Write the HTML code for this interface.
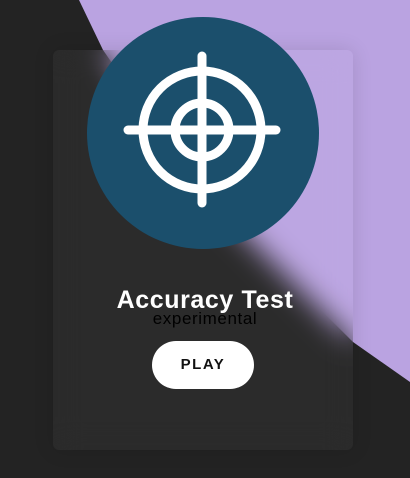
<!DOCTYPE html>
<html><head><style>
html,body{margin:0;padding:0}
body{width:410px;height:478px;background:#232323;position:relative;overflow:hidden;font-family:"Liberation Sans",sans-serif}
svg.bg{position:absolute;left:0;top:0}
.card{position:absolute;left:53px;top:50px;width:300px;height:400px;border-radius:6px;background:rgba(255,255,255,0.04);backdrop-filter:blur(14px);-webkit-backdrop-filter:blur(14px);box-shadow:0 0 20px rgba(0,0,0,0.12)}
.circ{position:absolute;left:87px;top:17px;width:232px;height:232px;border-radius:50%;background:#1b4f6c}
.title{position:absolute;left:0;width:410px;top:286px;text-align:center;color:#fff;font-weight:bold;font-size:25px;letter-spacing:0.6px}
.sub{position:absolute;left:0;width:410px;top:309px;text-align:center;color:#000;font-size:17px;letter-spacing:0.6px}
.btn{position:absolute;left:152px;top:341px;width:102px;height:48px;border-radius:24px;background:#fff;color:#111;font-weight:bold;font-size:15px;letter-spacing:1.5px;text-align:center;line-height:48px}
</style></head><body>
<svg class="bg" width="410" height="478"><polygon points="79,0 410,0 410,382 353,342 200,190 103,50" fill="#baa3e1"/></svg>
<div class="card"></div>
<div class="circ"></div>
<svg style="position:absolute;left:0;top:0" width="410" height="478">
<g stroke="#fff" stroke-width="9" fill="none" stroke-linecap="round">
<circle cx="202" cy="130" r="59"/>
<circle cx="202" cy="130" r="27"/>
<line x1="128" y1="130" x2="276" y2="130"/>
<line x1="202" y1="56" x2="202" y2="203"/>
</g></svg>
<div class="title">Accuracy Test</div>
<div class="sub">experimental</div>
<div class="btn">PLAY</div>
</body></html>
